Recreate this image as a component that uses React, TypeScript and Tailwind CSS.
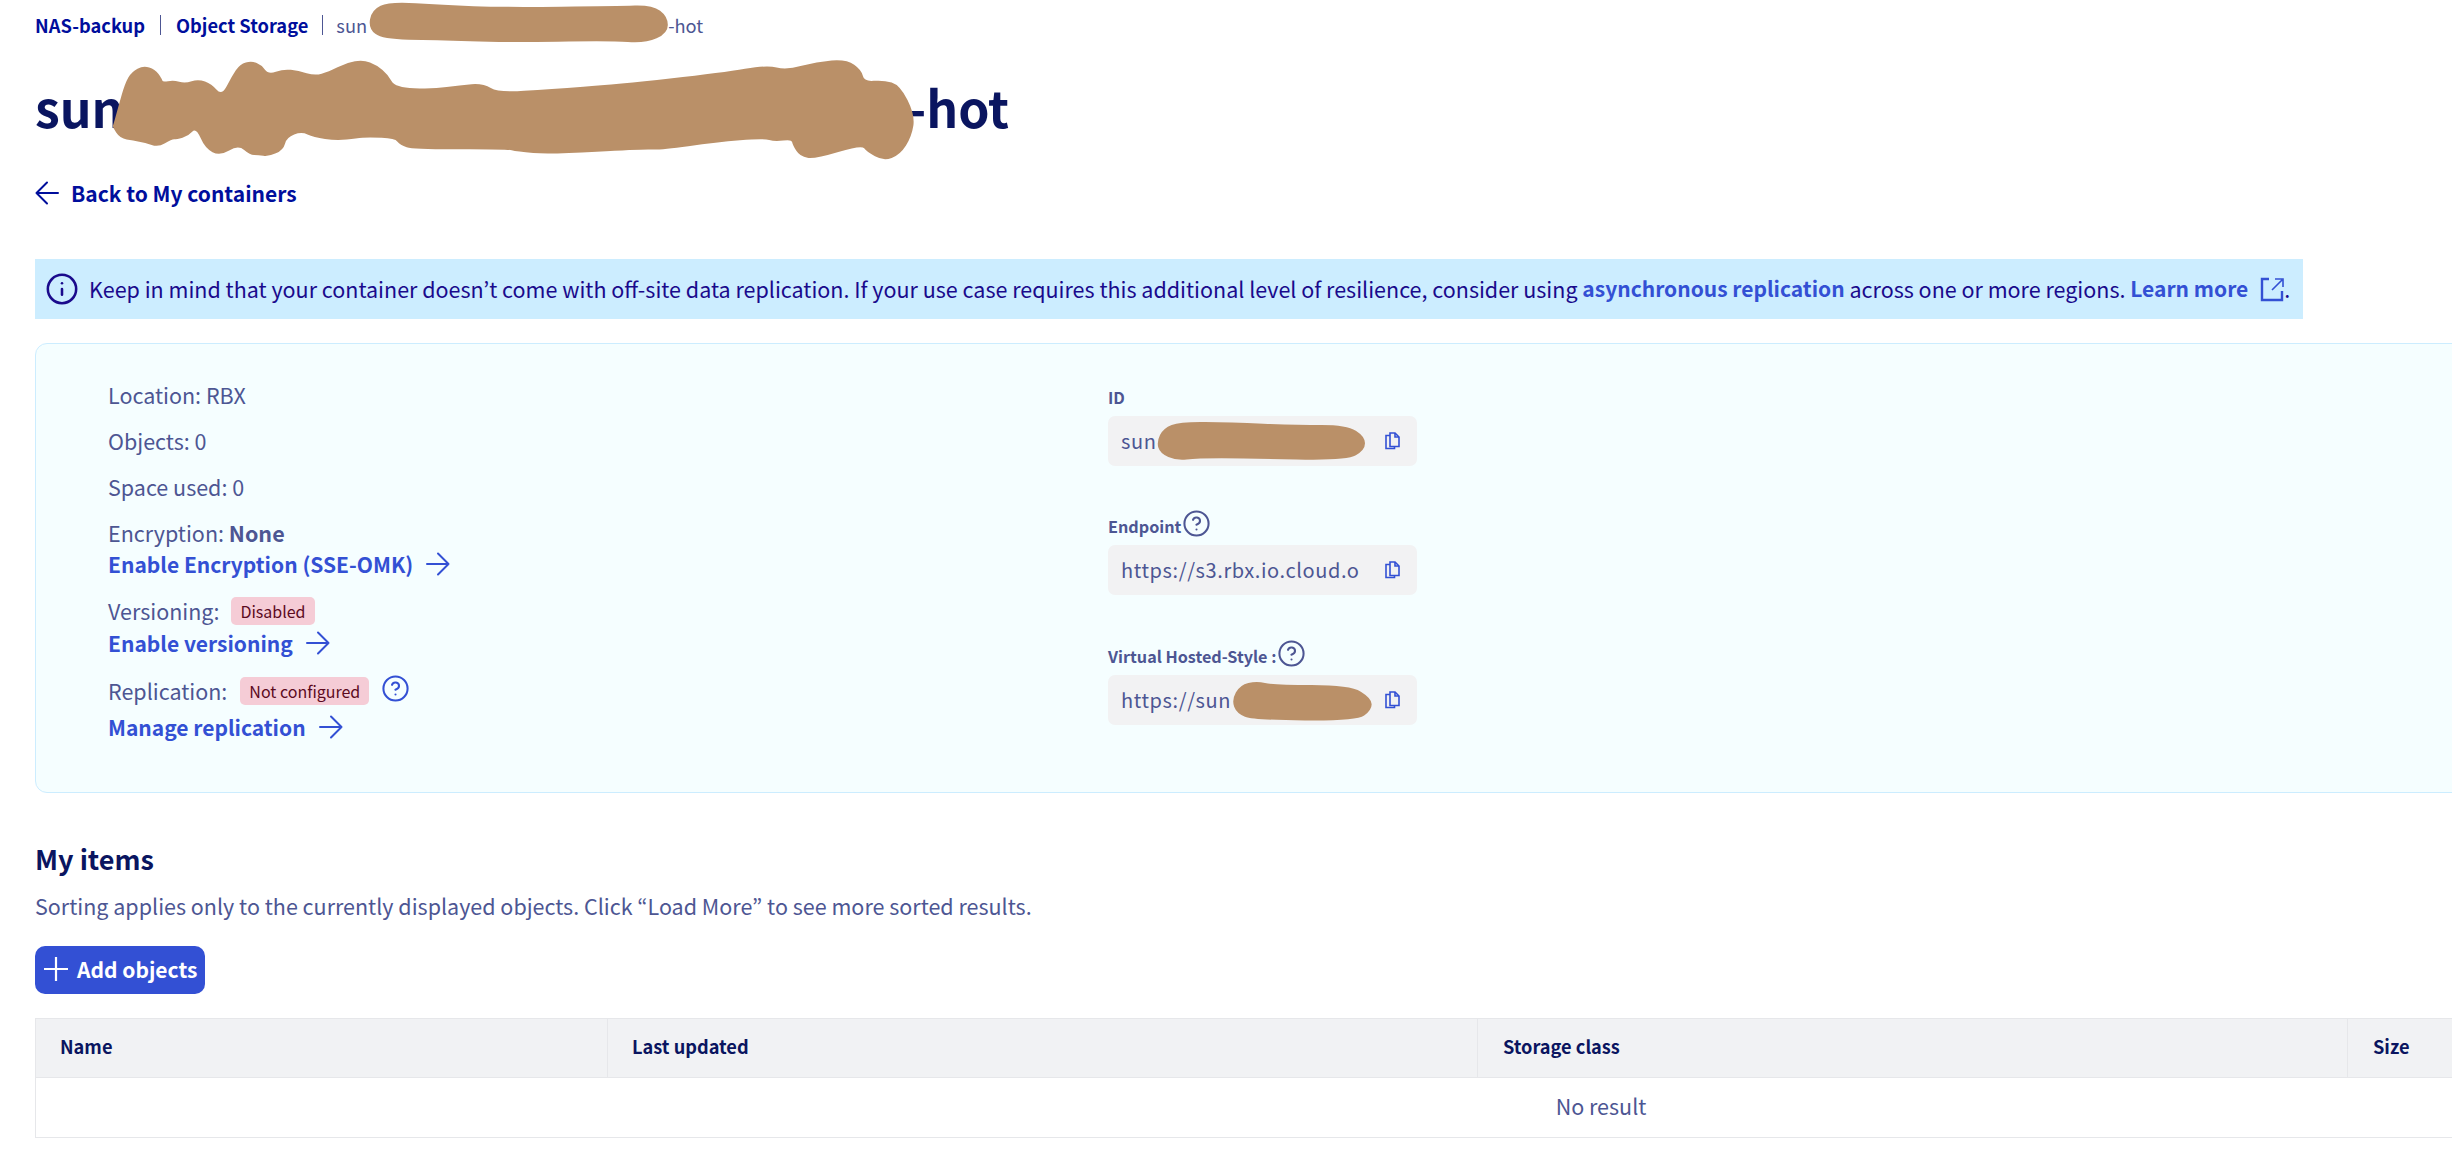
import React from "react";
import { CircleHelp, Info } from "lucide-react";

type P = [number, number];

function smooth(points: P[], ox: number, oy: number, sx: number, sy: number) {
  const pts = points.map(([x, y]) => [ox + x * sx, oy + y * sy]);
  const n = pts.length;
  const mid = (a: number[], b: number[]) => [(a[0] + b[0]) / 2, (a[1] + b[1]) / 2];
  const start = mid(pts[n - 1], pts[0]);
  let d = `M${start[0]} ${start[1]}`;
  for (let i = 0; i < n; i++) {
    const m = mid(pts[i], pts[(i + 1) % n]);
    d += ` Q${pts[i][0]} ${pts[i][1]} ${m[0]} ${m[1]}`;
  }
  return d + " Z";
}

const titleBlob: P[] = [
  [70,225],[85,170],[105,100],[125,65],[160,47],[195,58],[215,85],[218,97],[250,90],[285,100],[325,87],[365,102],[395,137],[425,80],[450,42],[485,33],[515,45],[535,73],[580,57],[625,62],[675,77],[715,65],[770,38],[820,30],[860,45],[895,75],[915,112],[1030,117],[1110,105],[1180,100],[1225,128],[1380,117],
  [1580,103],[1900,68],[2030,45],[2090,60],[2180,35],[2270,28],[2315,60],[2322,95],[2380,90],[2430,105],[2475,195],[2465,260],[2430,315],[2380,333],[2330,305],[2315,285],[2175,327],[2130,320],[2108,285],[2105,268],[2055,275],[2020,265],[1880,277],[1710,300],[1660,297],[1380,313],[1280,305],[1250,297],
  [970,298],[930,285],[915,265],[835,262],[800,265],[740,272],[670,262],[635,245],[590,262],[580,300],[535,320],[505,315],[480,315],[445,285],[390,318],[345,295],[318,232],[295,258],[260,268],[245,268],[205,292],[165,278],[130,272],[90,265],[67,230],
];
const crumbBlob: P[] = [[555,5],[630,15],[720,22],[880,18],[930,15],[952,50],[952,100],[920,130],[870,122],[720,128],[620,120],[545,118],[525,85],[530,30]];
const idBlob: P[] = [[300,155],[450,157],[650,165],[800,165],[855,200],[855,240],[800,272],[500,265],[350,265],[290,272],[240,250],[230,215],[250,175]];
const vhBlob: P[] = [[530,933],[580,945],[810,945],[875,985],[875,1020],[830,1053],[520,1050],[470,1030],[455,990],[480,945]];

function Copy() {
  return (
    <svg width="17" height="19" viewBox="0 0 17 19" fill="none" stroke="#3350d4" strokeWidth="1.6" className="shrink-0">
      <path d="M6 3.5H2v13h8.5v-2" />
      <path d="M6 1h5l4 4v9.5H6z" />
      <path d="M11 1v4h4" />
    </svg>
  );
}

function ExternalIcon() {
  return (
    <svg width="24" height="25" viewBox="0 0 24 25" fill="none" stroke="#3350d4" strokeWidth="2.4" className="inline-block shrink-0">
      <path d="M9 2H2v21h20v-9" />
      <path d="M12 13 22 3M15 2h8v8" strokeWidth="1.6" />
    </svg>
  );
}

function LongArrow({ left }: { left?: boolean }) {
  return (
    <svg width="24" height="24" viewBox="0 0 24 24" fill="none" stroke="currentColor" strokeWidth="2" strokeLinecap="round" strokeLinejoin="round" className="shrink-0">
      {left ? <path d="M23 12H1.5M12 1.5 1.5 12 12 22.5" /> : <path d="M1 12h21.5M12 1.5 22.5 12 12 22.5" />}
    </svg>
  );
}

function PlusIcon() {
  return (
    <svg width="24" height="24" viewBox="0 0 24 24" fill="none" stroke="currentColor" strokeWidth="2.2" className="shrink-0">
      <path d="M12 0v24M0 12h24" />
    </svg>
  );
}

function CodeBox({ text }: { text: string }) {
  return (
    <div className="mt-[9px] flex h-[50px] w-[309px] items-center justify-between rounded-[7px] bg-[#f2f2f3] pl-[13px] pr-[16px]">
      <span className="text-[20px] leading-[30px] tracking-[0.6px] text-[#4d5693]">{text}</span>
      <Copy />
    </div>
  );
}

function ActionLink({ text }: { text: string }) {
  return (
    <a className="flex h-[30px] items-center gap-[13px] text-[21px] font-semibold leading-[30px] text-[#3350d4]">
      {text}
      <LongArrow />
    </a>
  );
}

function Chip({ text }: { text: string }) {
  return (
    <span className="flex h-[28px] items-center rounded-[5px] bg-[#f5ccd6] px-[9px] text-[16px] leading-[20px] text-[#5c0a1e]">
      {text}
    </span>
  );
}

export default function App() {
  return (
    <div className="relative h-[1175px] w-full overflow-hidden bg-white font-['Noto_Sans_CJK_JP','Noto_Sans',sans-serif] text-[21.5px] text-[#4d5693]">
      <div className="pl-[35px]">
        <nav className="flex h-[50px] items-center text-[18.3px] leading-[24px]">
          <a className="font-semibold text-[#000e9c]">NAS-backup</a>
          <span className="mx-[15px] h-[20px] w-px bg-[#4d5693]" />
          <a className="font-semibold text-[#000e9c]">Object Storage</a>
          <span className="ml-[14px] mr-[13px] h-[20px] w-px bg-[#4d5693]" />
          <span>sun</span>
          <span className="w-[301px]" />
          <span>-hot</span>
        </nav>

        <h1 className="mt-[21px] flex h-[70px] items-center text-[50px] font-bold leading-[70px] text-[#0a1560]">
          <span>sun</span>
          <span className="w-[784px]" />
          <span>-hot</span>
        </h1>

        <a className="mt-[37px] flex h-[30px] items-center gap-[12px] text-[21px] font-semibold leading-[30px] text-[#000e9c]">
          <LongArrow left />
          Back to My containers
        </a>

        <div className="mt-[51px] flex h-[60px] w-[2268px] items-center whitespace-nowrap bg-[#ccedff] pl-[10px] text-[#1a0a8c]">
          <Info size={34} strokeWidth={1.8} className="mr-[10px] shrink-0" />
          <span>Keep in mind that your container doesn’t come with off-site data replication. If your use case requires this additional level of resilience, consider using&nbsp;</span>
          <a className="text-[21px] font-semibold text-[#3350d4]">asynchronous replication</a>
          <span>&nbsp;across one or more regions.&nbsp;</span>
          <a className="text-[21px] font-semibold text-[#3350d4]">Learn more</a>
          <span className="ml-[12px] flex items-center"><ExternalIcon /></span>
          <span>.</span>
        </div>

        <section className="mt-[24px] flex h-[450px] w-[3132px] rounded-[12px] border border-[#ccedff] bg-[#f5feff]">
          <div className="w-[1072px] pl-[72px] pt-[36px] leading-[30px]">
            <p>Location: RBX</p>
            <p className="mt-[16px]">Objects: 0</p>
            <p className="mt-[16px]">Space used: 0</p>
            <p className="mt-[16px]">Encryption: <b className="font-bold">None</b></p>
            <div className="mt-[1px]"><ActionLink text="Enable Encryption (SSE-OMK)" /></div>
            <div className="mt-[17px] flex h-[30px] items-center gap-[12px]">Versioning: <Chip text="Disabled" /></div>
            <div className="mt-[2px]"><ActionLink text="Enable versioning" /></div>
            <div className="mt-[18px] flex h-[30px] items-center gap-[13px]">
              Replication: <Chip text="Not configured" />
              <CircleHelp size={29} strokeWidth={1.7} className="-ml-[1px] -mt-[6px] text-[#3350d4]" />
            </div>
            <div className="mt-[6px]"><ActionLink text="Manage replication" /></div>
          </div>

          <div className="pt-[43px]">
            <div className="flex h-[20px] items-center text-[16.2px] font-bold leading-[20px]">ID</div>
            <CodeBox text="sun" />
            <div className="mt-[50px] flex h-[20px] items-center gap-[1px] text-[16.2px] font-bold leading-[20px]">
              Endpoint <CircleHelp size={29} strokeWidth={1.7} className="-mt-[6px]" />
            </div>
            <CodeBox text="https://s3.rbx.io.cloud.o" />
            <div className="mt-[51px] flex h-[20px] items-center gap-[1px] text-[16.2px] font-bold leading-[20px]">
              Virtual Hosted-Style : <CircleHelp size={29} strokeWidth={1.7} className="-mt-[6px]" />
            </div>
            <CodeBox text="https://sun" />
          </div>
        </section>

        <h2 className="mt-[46px] h-[40px] text-[27px] font-bold leading-[40px] text-[#0a1560]">My items</h2>
        <p className="mt-[12px] h-[30px] leading-[30px]">Sorting applies only to the currently displayed objects. Click “Load More” to see more sorted results.</p>

        <button className="mt-[25px] flex h-[48px] w-[170px] items-center gap-[9px] rounded-[10px] bg-[#3350d4] pb-[2px] pl-[9px] text-[21px] font-semibold leading-[30px] text-white">
          <PlusIcon />
          Add objects
        </button>

        <div className="mt-[24px] w-[3132px] border-x border-[#e6e7ea]">
          <div className="grid h-[60px] grid-cols-[571px_870px_870px_1fr] border-y border-[#e6e7ea] bg-[#f1f2f4] text-[18.2px] font-semibold text-[#0a1560]">
            <div className="flex items-center pb-[2px] pl-[24px]">Name</div>
            <div className="flex items-center border-l border-[#e6e7ea] pb-[2px] pl-[24px]">Last updated</div>
            <div className="flex items-center border-l border-[#e6e7ea] pb-[2px] pl-[25px]">Storage class</div>
            <div className="flex items-center border-l border-[#e6e7ea] pb-[2px] pl-[25px]">Size</div>
          </div>
          <div className="flex h-[60px] items-center justify-center border-b border-[#e6e7ea] pb-[2px]">No result</div>
        </div>
      </div>

      <svg className="pointer-events-none absolute left-0 top-0" width="2452" height="1175" fill="#ba9068">
        <path d={smooth(crumbBlob, 0, 0, 1 / 1.4255, 1 / 3)} />
        <path d={smooth(titleBlob, 90, 50, 1 / 3, 1 / 3)} />
        <path d={smooth(idBlob, 1080, 370, 1 / 3, 1 / 3)} />
        <path d={smooth(vhBlob, 1080, 370, 1 / 3, 1 / 3)} />
      </svg>
    </div>
  );
}
